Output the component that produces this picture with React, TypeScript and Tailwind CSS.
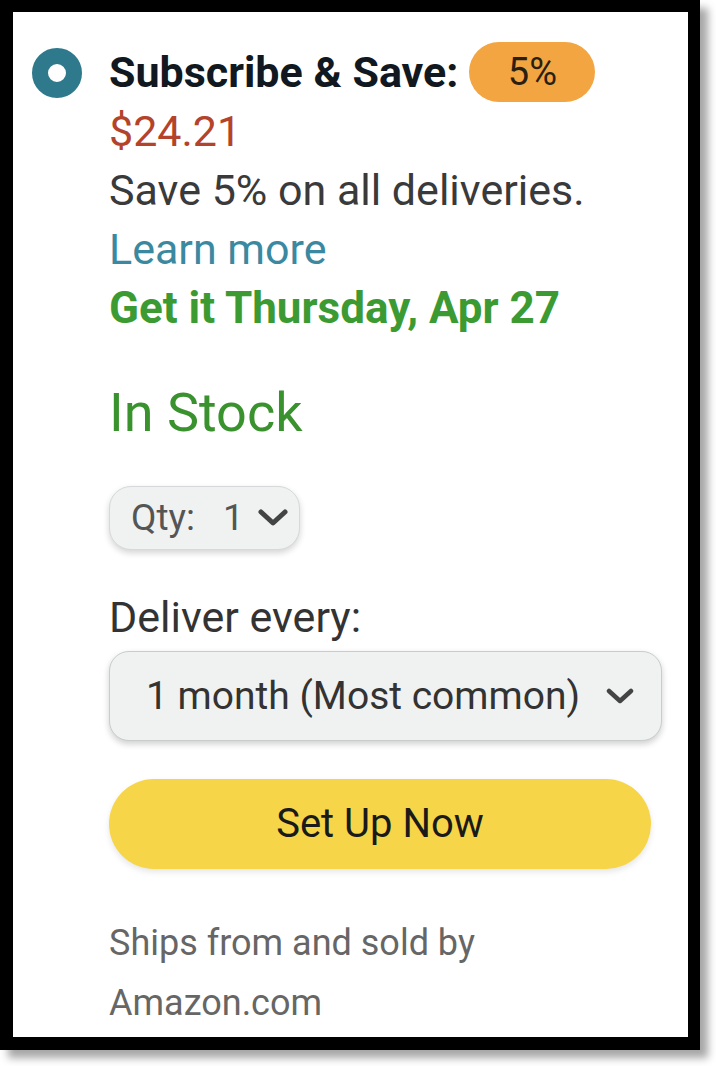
export default function App() {
  return (
    <div className="w-[716px] h-[1066px] bg-white font-['Roboto',sans-serif]">
      <div className="w-[700px] h-[1050px] border-t-[12px] border-l-[13px] border-r-[12px] border-b-[13px] border-black bg-white shadow-[8px_8px_8px_rgba(0,0,0,0.35)]">
        <div className="flex gap-[27px] pl-[19px] pt-[30px]">
          <div className="mt-[6px] h-[50px] w-[50px] shrink-0 rounded-full border-[16px] border-[#2e7a8c]" />
          <div className="flex flex-col">
            <div className="flex h-[60px] items-center">
              <span className="text-[43px] font-bold leading-[59px] text-[#111820]">Subscribe &amp; Save:</span>
              <span className="ml-[11px] flex h-[60px] w-[126px] items-center justify-center rounded-full bg-[#f2a541] text-[38px] leading-none text-[#2a2012]">
                5%
              </span>
            </div>
            <div className="text-[43px] leading-[59px] text-[#b4432b]">$24.21</div>
            <div className="text-[43px] leading-[59px] text-[#3a3a3a]">Save 5% on all deliveries.</div>
            <div className="text-[43px] leading-[59px] text-[#3a89a0]">Learn more</div>
            <div className="text-[44px] font-bold leading-[59px] text-[#3c9a33]">Get it Thursday, Apr 27</div>
            <div className="mt-[40px] text-[54px] leading-[70px] text-[#3a922f]">In Stock</div>
            <div className="mt-[38px] flex h-[64px] w-[191px] items-center rounded-[22px] border border-[#d5d9d9] bg-[#f0f2f2] pl-[21px] shadow-[0_3px_6px_rgba(15,17,17,0.18)]">
              <span className="text-[37px] text-[#555]">Qty:</span>
              <span className="ml-[28px] text-[37px] text-[#555]">1</span>
              <svg className="ml-[14px]" width="30" height="18" viewBox="0 0 30 18" fill="none">
                <polyline points="3,3 15,14 27,3" stroke="#444" strokeWidth="5" strokeLinecap="round" strokeLinejoin="round" />
              </svg>
            </div>
            <div className="mt-[38px] text-[43px] leading-[59px] text-[#333]">Deliver every:</div>
            <div className="mt-[4px] flex h-[90px] w-[553px] items-center justify-between rounded-[20px] border border-[#c8cccc] bg-[#f0f2f2] pl-[36px] pr-[27px] shadow-[0_3px_6px_rgba(15,17,17,0.2)]">
              <span className="text-[39px] text-[#333]">1 month (Most common)</span>
              <svg width="28" height="17" viewBox="0 0 28 17" fill="none">
                <polyline points="3,3 14,13 25,3" stroke="#444" strokeWidth="4.5" strokeLinecap="round" strokeLinejoin="round" />
              </svg>
            </div>
            <button className="mt-[38px] flex h-[90px] w-[542px] items-center justify-center rounded-full bg-[#f7d548] text-[40px] text-[#1a1a1a] shadow-[0_3px_6px_rgba(0,0,0,0.1)]">
              Set Up Now
            </button>
            <div className="mt-[44px] text-[36px] leading-[60px] text-[#666]">Ships from and sold by</div>
            <div className="text-[36px] leading-[60px] text-[#666]">Amazon.com</div>
          </div>
        </div>
      </div>
    </div>
  );
}
